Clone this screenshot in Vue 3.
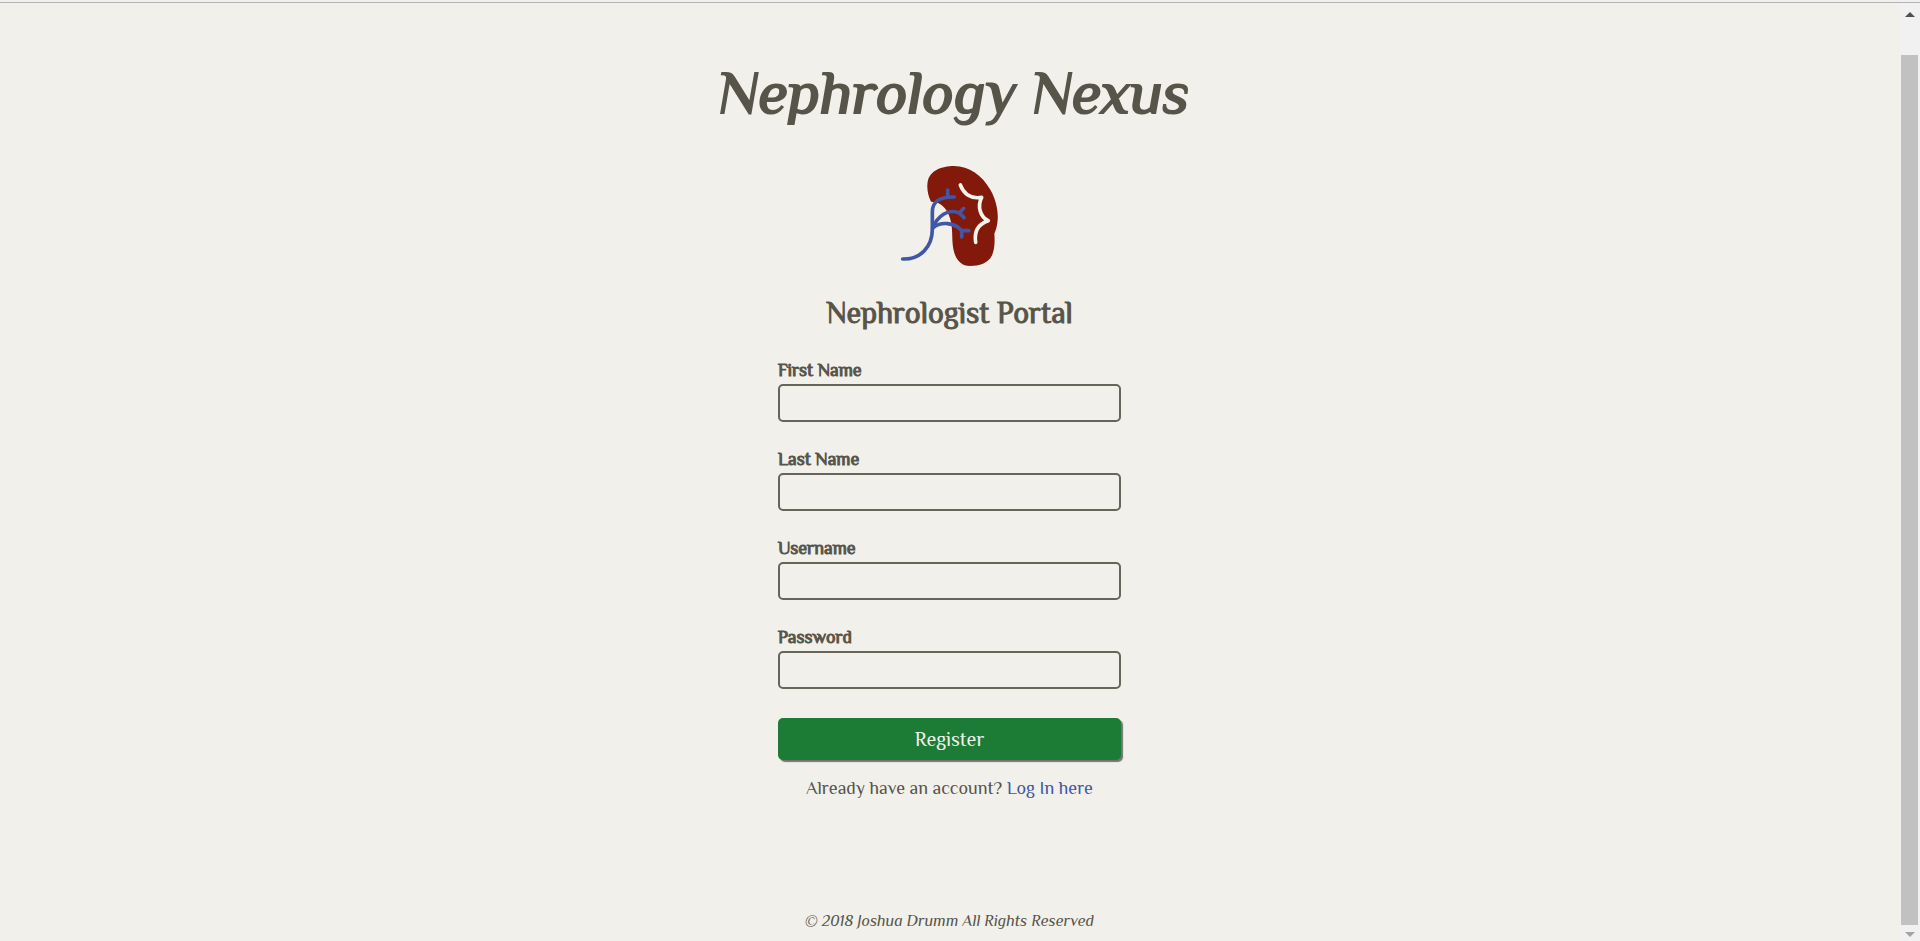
<script setup>
import { reactive } from 'vue'

const fields = [
  { id: 'firstName', label: 'First Name', type: 'text' },
  { id: 'lastName', label: 'Last Name', type: 'text' },
  { id: 'username', label: 'Username', type: 'text' },
  { id: 'password', label: 'Password', type: 'password' },
]
const form = reactive({ firstName: '', lastName: '', username: '', password: '' })
</script>

<template>
  <div class="window">
    <div class="page">
      <header>
        <h1>Nephrology Nexus</h1>
      </header>
      <main>
        <svg class="logo" viewBox="0 0 360 360" role="img" aria-label="Kidney">
          <path
            fill="#82190b"
            d="M123 140C113 120 110 98 113 80C119 47 155 33 192 33C237 33 277 62 301 104C318 134 325 167 323 194C322 211 318 225 313 236C315 259 314 286 305 303C294 324 268 333 240 333C213 333 196 313 190 282C184 249 190 222 180 190C174 168 158 146 136 142Z"
          />
          <g fill="none" stroke-linecap="round" stroke-linejoin="round">
            <g stroke="#3f57a6" stroke-width="11">
              <path d="M38 312C91 314 127 276 127 222V171C127 138 151 125 193 126M173 105V126" />
              <path d="M128 219C142 184 174 159 208 174L221 160M208 174L222 188" />
              <path d="M128 219C151 199 194 201 215 227H237M215 227V246" />
            </g>
            <path
              stroke="#f7f4ee"
              stroke-width="11"
              d="M211 90C221 116 242 133 275 127C261 154 271 187 295 197C264 207 252 230 257 262"
            />
          </g>
        </svg>
        <h2>Nephrologist Portal</h2>
        <form @submit.prevent>
          <div v-for="field in fields" :key="field.id" class="field">
            <label :for="field.id">{{ field.label }}</label>
            <input :id="field.id" v-model="form[field.id]" :type="field.type" autocomplete="off" />
          </div>
          <button type="submit">Register</button>
        </form>
        <p class="login">Already have an account? <a href="#login">Log In here</a></p>
      </main>
      <footer>© 2018 Joshua Drumm All Rights Reserved</footer>
    </div>
    <div class="scrollbar" aria-hidden="true">
      <svg viewBox="0 0 10 5"><path fill="#505050" d="M5 0L10 5H0Z" /></svg>
      <div class="thumb"></div>
      <svg viewBox="0 0 10 5"><path fill="#a3a3a3" d="M0 0H10L5 5Z" /></svg>
    </div>
  </div>
</template>

<style>
body {
  margin: 0;
  background: #f1f0ea;
}
</style>

<style scoped>
.window {
  display: flex;
  box-sizing: border-box;
  min-height: 100vh;
  padding-top: 2px;
  color: #57544a;
  font-family: Philosopher, "Liberation Serif", serif;
}
.page {
  flex: 1;
  display: flex;
  flex-direction: column;
  align-items: center;
  border-top: 1px solid #b3b3b8;
}
h1 {
  margin: 54px 0 0;
  padding-left: 8px;
  font-size: 60px;
  line-height: 72px;
  font-style: italic;
  font-weight: normal;
  -webkit-text-stroke: 2px currentColor;
}
main {
  display: flex;
  flex-direction: column;
  align-items: center;
}
.logo {
  width: 120px;
  height: 120px;
  margin-top: 26px;
}
h2 {
  margin: 20px 0 0;
  font-size: 30px;
  line-height: 36px;
  font-weight: normal;
  -webkit-text-stroke: 1px currentColor;
}
form {
  width: 343px;
  margin-top: 29px;
}
.field {
  margin-bottom: 27px;
}
label {
  display: block;
  font-size: 18px;
  line-height: 20px;
  padding-bottom: 4px;
  -webkit-text-stroke: 1px currentColor;
}
input {
  display: block;
  box-sizing: border-box;
  width: 100%;
  height: 38px;
  padding: 4px 8px;
  border: 2px solid #67655a;
  border-radius: 5px;
  background: transparent;
  color: inherit;
  font: inherit;
  font-size: 18px;
}
button {
  display: block;
  width: 100%;
  height: 42px;
  margin-top: 29px;
  padding: 0;
  border: 0;
  border-radius: 5px;
  background: #1c7b34;
  box-shadow: 2px 2px 1px #75736f;
  color: #f1f0ea;
  font: inherit;
  font-size: 20px;
}
.login {
  margin: 16px 0 0;
  font-size: 18px;
  line-height: 24px;
}
a {
  color: #3f57a6;
  text-decoration: none;
}
footer {
  margin-top: auto;
  padding-bottom: 10px;
  font-size: 16px;
  line-height: 20px;
  font-style: italic;
}
.scrollbar {
  display: flex;
  flex-direction: column;
  align-items: center;
  box-sizing: border-box;
  width: 21px;
  padding: 9px 2px 4px;
  border-top: 1px solid #b3b3b8;
  background: #f1f1f1;
}
.scrollbar svg {
  width: 10px;
  height: 5px;
}
.thumb {
  flex: 1;
  width: 100%;
  margin: 38px 0 7px;
  background: #c1c1c1;
}
</style>
